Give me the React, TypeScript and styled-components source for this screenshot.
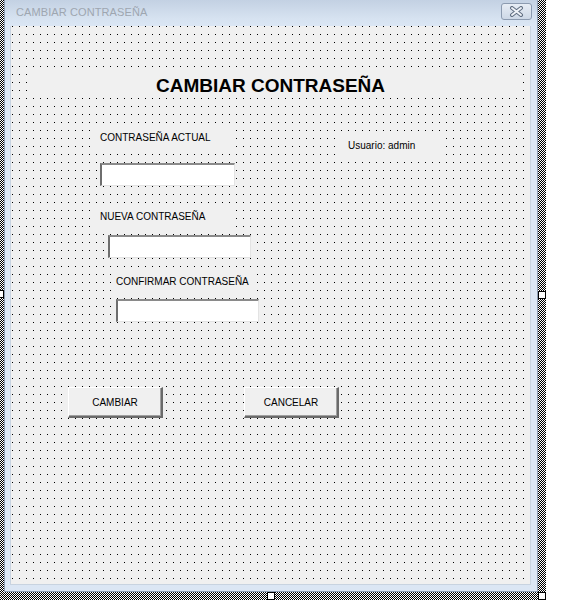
import React from "react";
import styled, { createGlobalStyle } from "styled-components";

const GlobalStyle = createGlobalStyle`
  html, body {
    margin: 0;
    padding: 0;
    background: #ffffff;
  }
  body {
    font-family: "Liberation Sans", Arial, sans-serif;
  }
`;

const Selection = styled.div`
  position: relative;
  width: 546px;
  height: 600px;
  box-sizing: border-box;
  padding: 0 8px 8px 4px;
  background: repeating-conic-gradient(#000 0% 25%, #fff 0% 50%) 0 0 / 2px 2px;
`;

const Handle = styled.div<{ $left: number; $top: number }>`
  position: absolute;
  left: ${(p) => p.$left}px;
  top: ${(p) => p.$top}px;
  width: 6px;
  height: 6px;
  background: #fff;
  border: 1px solid #000;
`;

const Window = styled.div`
  width: 534px;
  height: 592px;
  box-sizing: border-box;
  display: flex;
  flex-direction: column;
  background: #dbe6f4;
  border-left: 1px solid #8d9db3;
  border-right: 1px solid #8d9db3;
  border-bottom: 1px solid #8d9db3;
`;

const TitleBar = styled.div`
  height: 26px;
  flex: none;
  display: flex;
  align-items: center;
  justify-content: space-between;
  padding: 0 5px 0 11px;
  background: linear-gradient(#c3d1e3, #d6e2f0 70%, #dbe6f4);
`;

const Title = styled.span`
  font-size: 11px;
  color: #9ea6b0;
  letter-spacing: 0.1px;
  margin-top: -2px;
`;

const CloseButton = styled.div`
  width: 31px;
  height: 17px;
  box-sizing: border-box;
  margin-top: -4px;
  border: 1px solid #8c9bb0;
  border-radius: 3px;
  background: linear-gradient(#e7edf5, #cdd8e6);
  display: flex;
  align-items: center;
  justify-content: center;
`;

const Frame = styled.div`
  flex: 1;
  display: flex;
  padding: 0 6px 6px 5px;
`;

const Client = styled.div`
  flex: 1;
  display: flex;
  flex-direction: column;
  border: 1px solid #c8d3e0;
  border-top: none;
  background-color: #f0f0f0;
  background-image: linear-gradient(90deg, #f0f0f0 6px, transparent 6px),
    linear-gradient(#f0f0f0 7px, #000 7px);
  background-size: 7px 8px;
  background-position: -5px -7px;
`;

const Row = styled.div<{ $top: number; $gap?: number; $left?: number }>`
  display: flex;
  align-items: flex-start;
  margin-top: ${(p) => p.$top}px;
  margin-left: ${(p) => p.$left ?? 0}px;
  gap: ${(p) => p.$gap ?? 0}px;
`;

const Heading = styled.div<{ $left: number; $top: number }>`
  width: 492px;
  height: 26px;
  box-sizing: border-box;
  margin-left: ${(p) => p.$left}px;
  margin-top: ${(p) => p.$top}px;
  padding: 2px 9px 0 0;
  background: #f0f0f0;
  display: flex;
  align-items: center;
  justify-content: center;
  font-size: 19px;
  font-weight: bold;
  color: #000;
`;

const Label = styled.div<{ $left: number; $top?: number; $width: number }>`
  width: ${(p) => p.$width}px;
  height: 22px;
  box-sizing: border-box;
  margin-left: ${(p) => p.$left}px;
  margin-top: ${(p) => p.$top ?? 0}px;
  padding: 5px 0 0 ${(p) => (p.$width < 120 ? 7 : 4)}px;
  background: #f0f0f0;
  font-size: 10px;
  line-height: 12px;
  color: #000;
  white-space: nowrap;
`;

const TextBox = styled.div<{ $left: number; $top: number; $width: number }>`
  width: ${(p) => p.$width}px;
  height: 23px;
  box-sizing: border-box;
  margin-left: ${(p) => p.$left}px;
  margin-top: ${(p) => p.$top}px;
  background: #fff;
  border-top: 2px solid #8a8a8a;
  border-left: 2px solid #6e6e6e;
  border-right: 1px solid #e3e3e3;
  border-bottom: 1px solid #e3e3e3;
`;

const Button = styled.div`
  width: 95px;
  height: 31px;
  box-sizing: border-box;
  background: #f0f0f0;
  border-top: 1px solid #fff;
  border-left: 1px solid #fff;
  border-right: 2px solid #6a6a6a;
  border-bottom: 2px solid #6a6a6a;
  box-shadow: inset -1px -1px 0 #a0a0a0;
  display: flex;
  align-items: center;
  justify-content: center;
  font-size: 10px;
  color: #000;
`;

const CloseIcon = () => (
  <svg width="15" height="11" viewBox="0 0 15 11">
    <path d="M3 2 L12 9 M12 2 L3 9" stroke="#5f6d80" strokeWidth="4" strokeLinecap="round" />
    <path d="M3 2 L12 9 M12 2 L3 9" stroke="#eef2f7" strokeWidth="2" strokeLinecap="round" />
  </svg>
);

export default function App() {
  return (
    <>
      <GlobalStyle />
      <Selection>
        <Window>
          <TitleBar>
            <Title>CAMBIAR CONTRASEÑA</Title>
            <CloseButton>
              <CloseIcon />
            </CloseButton>
          </TitleBar>
          <Frame>
            <Client>
              <Heading $left={18} $top={46}>CAMBIAR CONTRASEÑA</Heading>
              <Row $top={29}>
                <Label $left={85} $width={140} style={{ height: 23 }}>CONTRASEÑA ACTUAL</Label>
                <Label $left={105} $top={8} $width={100}>Usuario: admin</Label>
              </Row>
              <TextBox $left={89} $top={6} $width={135} />
              <Label $left={85} $top={20} $width={140}>NUEVA CONTRASEÑA</Label>
              <TextBox $left={97} $top={7} $width={143} />
              <Label $left={101} $top={13} $width={140}>CONFIRMAR CONTRASEÑA</Label>
              <TextBox $left={105} $top={6} $width={143} />
              <Row $top={65} $left={57} $gap={81}>
                <Button>CAMBIAR</Button>
                <Button>CANCELAR</Button>
              </Row>
            </Client>
          </Frame>
        </Window>
        <Handle $left={-4} $top={290} />
        <Handle $left={538} $top={291} />
        <Handle $left={267} $top={592} />
        <Handle $left={538} $top={592} />
      </Selection>
    </>
  );
}
